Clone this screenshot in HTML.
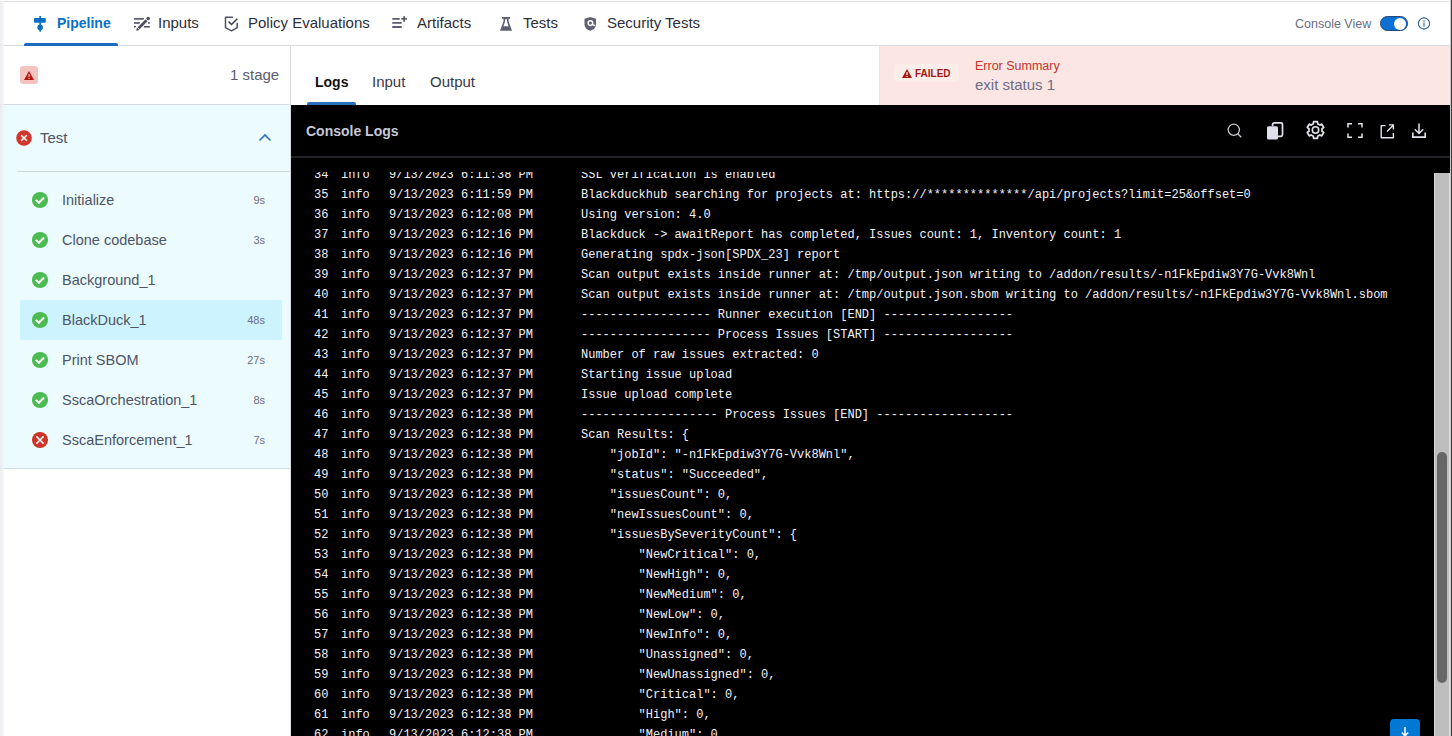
<!DOCTYPE html>
<html><head><meta charset="utf-8">
<style>
*{box-sizing:border-box;margin:0;padding:0}
html,body{width:1452px;height:736px;overflow:hidden;background:#fff;font-family:"Liberation Sans",sans-serif;color:#22222a}
.abs{position:absolute}
#topline{left:0;top:1px;width:1452px;height:1px;background:#dcdce2}
#lstrip{left:0;top:1px;width:4px;height:735px;background:linear-gradient(90deg,#e6e7eb,#f4f5f8);opacity:.75}
#nav{left:0;top:0;width:1452px;height:46px;border-bottom:1px solid #d9dae5}
.nt{position:absolute;top:13px;font-size:15px;line-height:20px;color:#2e2f3a;white-space:nowrap}
.ni{position:absolute;top:15px}
#sidebar{left:0;top:46px;width:291px;height:690px;border-right:1px solid #d9dae5;background:#fff}
#sbhead{left:0;top:0;width:290px;height:59px;border-bottom:1px solid #d9dae5}
#stage{left:0;top:59px;width:290px;height:364px;background:#ecfbfd;border-bottom:1px solid #d6dee5}
.step{position:absolute;left:20px;width:262px;height:40px;border-radius:4px}
.step .t{position:absolute;left:42px;top:11px;font-size:14.5px;line-height:20px;color:#4d5566;white-space:nowrap}
.step .d{position:absolute;right:17px;top:14px;font-size:11px;line-height:14px;color:#6b6d85}
.step svg{position:absolute;left:11px;top:12px}
#tabs{left:291px;top:46px;width:587px;height:59px;background:#fff}
.tab{position:absolute;top:26px;font-size:15px;line-height:20px;color:#22222a}
#err{left:879px;top:46px;width:571px;height:59px;background:#fbe6e4;border-left:1px solid #ece4e8}
#console{left:291px;top:105px;width:1159px;height:631px;background:#000}
#chead{left:0;top:0;width:1159px;height:53px;border-bottom:2px solid #222228}
#logs{left:0;top:67px;width:1143px;height:564px;overflow:hidden}
.lwrap{position:absolute;left:0;top:-7px}
.ln{position:relative;height:20px;font-family:"Liberation Mono",monospace;font-size:12px;line-height:20px;color:#f3f3fa;white-space:pre}
.ln span{position:absolute;top:0}
.ln .n{left:23px}
.ln .lv{left:50px}
.ln .ts{left:98px}
.ln .msg{left:290px}
#sbtrack{left:1143px;top:68px;width:16px;height:563px;background:#bebebe;border-left:1px solid #d8d8d8;border-right:1px solid #e2e2e2}
#sbthumb{left:1146px;top:347px;width:10px;height:231px;background:#676767;border-radius:5px}
#edge1{left:1450px;top:0;width:1px;height:736px;background:#c9c9cc}
#edge2{left:1451px;top:0;width:1px;height:736px;background:#3a3a3a}
</style></head><body>
<div id="nav" class="abs">
  <div id="topline" class="abs"></div>
  <!-- Pipeline -->
  <svg class="ni" style="left:28px;top:10px" width="26" height="26" viewBox="0 0 26 26"><g fill="#0a6fc7"><rect x="11.3" y="6" width="1.7" height="3"/><rect x="6" y="8" width="11.8" height="4.7" rx="1"/><rect x="11.3" y="12" width="1.7" height="4"/><circle cx="12.1" cy="17.4" r="2.8"/><rect x="11.3" y="19" width="1.7" height="2.7"/></g></svg>
  <div class="nt" style="left:57px;color:#0a6fc7;font-weight:bold;font-size:14px;top:13px">Pipeline</div>
  <div class="abs" style="left:24px;top:43px;width:94px;height:3px;background:#1a6bbd;border-radius:2px 2px 0 0"></div>
  <!-- Inputs -->
  <svg class="ni" style="left:130px;top:10px" width="26" height="26" viewBox="0 0 26 26"><g fill="#4f5162"><rect x="4" y="8.1" width="10" height="1.6"/><rect x="4" y="12.2" width="6" height="1.6"/><rect x="4" y="16" width="2" height="1.6"/><rect x="14" y="16" width="5.8" height="1.6"/><rect x="18" y="12.2" width="1.8" height="1.6"/></g><path d="M6.6 20.2 18.2 8.5" stroke="#fff" stroke-width="5.2"/><path d="M8.6 18.2 16.6 10.2" stroke="#4f5162" stroke-width="2.8"/><path d="M6.2 20.8 6.9 17.4 9.6 20.1z" fill="#4f5162"/><circle cx="18.2" cy="8.5" r="1.8" fill="#4f5162"/></svg>
  <div class="nt" style="left:158px">Inputs</div>
  <!-- Policy -->
  <svg class="ni" style="left:220px;top:10px" width="26" height="26" viewBox="0 0 26 26"><path d="M12.9 7.2H5.5V17.7L11.5 20.8 17.2 17.7V12.7" fill="none" stroke="#4f5162" stroke-width="1.5" stroke-linejoin="round"/><path d="M8.5 11.5 11.5 14.5 17.3 8.7" fill="none" stroke="#383946" stroke-width="1.5"/></svg>
  <div class="nt" style="left:248px">Policy Evaluations</div>
  <!-- Artifacts -->
  <svg class="ni" style="left:388px;top:10px" width="26" height="26" viewBox="0 0 26 26"><g fill="#5c5e70"><rect x="4.2" y="7.9" width="7.6" height="1.8" rx=".5"/><rect x="4.2" y="12" width="9.6" height="1.8" rx=".5"/><rect x="4.2" y="16.1" width="9.6" height="1.8" rx=".5"/><rect x="13.2" y="7.9" width="5.8" height="1.8"/><rect x="15.2" y="6.2" width="1.8" height="5.6"/></g></svg>
  <div class="nt" style="left:417px">Artifacts</div>
  <!-- Tests -->
  <svg class="ni" style="left:494px;top:10px" width="26" height="26" viewBox="0 0 26 26"><path d="M8 6.9H16V8.7H14.6V11.3L18 20.7H6L9.5 11.3V8.7H8Z" fill="#5f6173"/><path d="M11.1 9.2H13V11.5L14.6 16.3H9.4L11.1 11.5Z" fill="#fff"/></svg>
  <div class="nt" style="left:523px">Tests</div>
  <!-- Security -->
  <svg class="ni" style="left:578px;top:10px" width="26" height="26" viewBox="0 0 26 26"><path d="M12.3 7 18 8.8V14.5C18 17.5 15.5 19.9 12.3 20.7 9 19.9 6.5 17.5 6.5 14.5V8.8Z" fill="#5f6173"/><circle cx="12.4" cy="13.1" r="2.3" fill="none" stroke="#fff" stroke-width="1.5"/><path d="M14 14.4 17.2 15.6" stroke="#fff" stroke-width="1.3"/></svg>
  <div class="nt" style="left:607px">Security Tests</div>
  <!-- console view -->
  <div class="nt" style="left:1295px;top:14px;font-size:12.5px;color:#6b6d85">Console View</div>
  <div class="abs" style="left:1380px;top:16px;width:28px;height:15px;border-radius:8px;background:#0a72d6;border:1.5px solid #26466e"></div>
  <div class="abs" style="left:1394px;top:17.5px;width:12px;height:12px;border-radius:6px;background:#fff"></div>
  <svg class="ni" style="left:1417px;top:17px" width="14" height="14" viewBox="0 0 14 14"><circle cx="7" cy="6.5" r="5.6" fill="none" stroke="#2e609c" stroke-width="1.1"/><circle cx="7" cy="4" r="0.8" fill="#2e609c"/><rect x="6.4" y="5.6" width="1.2" height="3.9" fill="#2e609c"/></svg>
</div>

<div id="sidebar" class="abs">
  <div id="sbhead" class="abs">
    <div class="abs" style="left:20px;top:20px;width:18px;height:18px;border-radius:3px;background:#f5c3c0"></div>
    <svg class="abs" style="left:24px;top:25px" width="10" height="9" viewBox="0 0 10 9"><path d="M5 0 10 9H0z" fill="#b41710"/><rect x="4.4" y="3" width="1.2" height="3" fill="#f5c3c0"/><rect x="4.4" y="6.8" width="1.2" height="1.2" fill="#f5c3c0"/></svg>
    <div class="abs" style="left:230px;top:19px;font-size:15px;line-height:20px;color:#5b5e6e">1 stage</div>
  </div>
  <div id="stage" class="abs">
    <svg class="abs" style="left:16px;top:25px" width="16" height="16" viewBox="0 0 16 16"><circle cx="8" cy="8" r="7.8" fill="#d2352a"/><path d="M5.2 5.2l5.6 5.6M10.8 5.2l-5.6 5.6" stroke="#fff" stroke-width="1.6"/></svg>
    <div class="abs" style="left:40px;top:23px;font-size:15px;line-height:20px;color:#4f5162">Test</div>
    <svg class="abs" style="left:258px;top:28px" width="14" height="9" viewBox="0 0 14 9"><path d="M1.5 7.5 7 2l5.5 5.5" fill="none" stroke="#2f74bf" stroke-width="1.6"/></svg>
    <div class="abs" style="left:17px;top:66px;width:273px;height:1px;background:#cfd8dd"></div>
    <div class="step" style="top:74px;"><svg width="18" height="18" viewBox="0 0 18 18"><circle cx="9" cy="9" r="8.1" fill="#4cbb51"/><path d="M4.9 8.9l2.9 2.9 5.3-5.3" fill="none" stroke="#fff" stroke-width="2"/></svg><div class="t">Initialize</div><div class="d">9s</div></div>
<div class="step" style="top:114px;"><svg width="18" height="18" viewBox="0 0 18 18"><circle cx="9" cy="9" r="8.1" fill="#4cbb51"/><path d="M4.9 8.9l2.9 2.9 5.3-5.3" fill="none" stroke="#fff" stroke-width="2"/></svg><div class="t">Clone codebase</div><div class="d">3s</div></div>
<div class="step" style="top:154px;"><svg width="18" height="18" viewBox="0 0 18 18"><circle cx="9" cy="9" r="8.1" fill="#4cbb51"/><path d="M4.9 8.9l2.9 2.9 5.3-5.3" fill="none" stroke="#fff" stroke-width="2"/></svg><div class="t">Background_1</div><div class="d"></div></div>
<div class="step" style="top:194px;"><div style="position:absolute;left:0;top:1px;width:262px;height:40px;background:#cdf4fe;border-radius:2px"></div><svg width="18" height="18" viewBox="0 0 18 18"><circle cx="9" cy="9" r="8.1" fill="#4cbb51"/><path d="M4.9 8.9l2.9 2.9 5.3-5.3" fill="none" stroke="#fff" stroke-width="2"/></svg><div class="t">BlackDuck_1</div><div class="d">48s</div></div>
<div class="step" style="top:234px;"><svg width="18" height="18" viewBox="0 0 18 18"><circle cx="9" cy="9" r="8.1" fill="#4cbb51"/><path d="M4.9 8.9l2.9 2.9 5.3-5.3" fill="none" stroke="#fff" stroke-width="2"/></svg><div class="t">Print SBOM</div><div class="d">27s</div></div>
<div class="step" style="top:274px;"><svg width="18" height="18" viewBox="0 0 18 18"><circle cx="9" cy="9" r="8.1" fill="#4cbb51"/><path d="M4.9 8.9l2.9 2.9 5.3-5.3" fill="none" stroke="#fff" stroke-width="2"/></svg><div class="t">SscaOrchestration_1</div><div class="d">8s</div></div>
<div class="step" style="top:314px;"><svg width="18" height="18" viewBox="0 0 18 18"><circle cx="9" cy="9" r="8" fill="#cc3428"/><path d="M5.4 5.4l7.2 7.2M12.6 5.4l-7.2 7.2" fill="none" stroke="#fff" stroke-width="1.5"/></svg><div class="t">SscaEnforcement_1</div><div class="d">7s</div></div>
  </div>
</div>

<div id="tabs" class="abs">
  <div class="tab" style="left:24px;font-weight:bold;font-size:14px;top:26px;color:#111114">Logs</div>
  <div class="tab" style="left:81px;color:#383946">Input</div>
  <div class="tab" style="left:139px;color:#383946">Output</div>
  <div class="abs" style="left:16px;top:56px;width:49px;height:3px;background:#2b70bd;border-radius:2px 2px 0 0"></div>
</div>

<div id="err" class="abs">
  <div class="abs" style="left:14px;top:18px;width:65px;height:18px;border-radius:4px;background:#fcedeb"></div>
  <svg class="abs" style="left:22px;top:23px" width="10" height="9" viewBox="0 0 10 9"><path d="M5 0 10 9H0z" fill="#a3180f"/><rect x="4.4" y="3" width="1.2" height="3" fill="#fcedeb"/><rect x="4.4" y="6.8" width="1.2" height="1.2" fill="#fcedeb"/></svg>
  <div class="abs" style="left:35px;top:21px;font-size:10px;line-height:14px;font-weight:bold;color:#a3180f">FAILED</div>
  <div class="abs" style="left:95px;top:12px;font-size:12.5px;line-height:16px;color:#c5332c">Error Summary</div>
  <div class="abs" style="left:95px;top:30px;font-size:15px;line-height:18px;color:#6b6d85">exit status 1</div>
</div>

<div id="console" class="abs">
  <div id="chead" class="abs">
    <div class="abs" style="left:15px;top:16px;font-size:14px;line-height:20px;font-weight:bold;color:#c6c8d6">Console Logs</div>
    <svg class="abs" style="left:935px;top:17px" width="18" height="18" viewBox="0 0 18 18"><circle cx="7.8" cy="7.8" r="5.6" fill="none" stroke="#c9c9cf" stroke-width="1.3"/><path d="M11.8 11.8 15.2 15.2" stroke="#c9c9cf" stroke-width="1.3"/></svg>
<svg class="abs" style="left:974px;top:16px" width="20" height="20" viewBox="0 0 20 20"><rect x="7.6" y="1.9" width="9.9" height="13.4" rx="1.6" fill="none" stroke="#e3e4ec" stroke-width="1.7"/><rect x="2" y="5" width="11" height="14" rx="1.6" fill="#000"/><rect x="2" y="5.3" width="11" height="13.3" rx="1.6" fill="#dfe0ea"/></svg>
<svg class="abs" style="left:1015px;top:15px" width="19" height="20" viewBox="0 0 19 20"><path d="M7.35 3.76 L7.57 1.62 L11.43 1.62 L11.65 3.76 L13.83 5.02 L15.79 4.13 L17.72 7.49 L15.98 8.74 L15.98 11.26 L17.72 12.51 L15.79 15.87 L13.83 14.98 L11.65 16.24 L11.43 18.38 L7.57 18.38 L7.35 16.24 L5.17 14.98 L3.21 15.87 L1.28 12.51 L3.02 11.26 L3.02 8.74 L1.28 7.49 L3.21 4.13 L5.17 5.02Z" fill="none" stroke="#e3e4ec" stroke-width="1.7" stroke-linejoin="round"/><circle cx="9.5" cy="10" r="3.2" fill="none" stroke="#e3e4ec" stroke-width="1.6"/></svg>
<svg class="abs" style="left:1055px;top:17px" width="18" height="17" viewBox="0 0 18 17"><path d="M2 5.5V1.8h4M12 1.8h4v3.7M16 11.5v3.7h-4M6 15.2H2v-3.7" fill="none" stroke="#e3e4ec" stroke-width="1.5"/></svg>
<svg class="abs" style="left:1088px;top:18px" width="16" height="16" viewBox="0 0 16 16"><path d="M6.5 2.6H2.2v12.2h12.2V10" fill="none" stroke="#e3e4ec" stroke-width="1.4" stroke-linejoin="round"/><path d="M8 8.5 14.3 2.2M9.8 1.9h4.6v4.6" fill="none" stroke="#e3e4ec" stroke-width="1.4"/></svg>
<svg class="abs" style="left:1120px;top:17px" width="16" height="17" viewBox="0 0 16 17"><path d="M8 1.5v10M3.8 7.3 8 11.5l4.2-4.2" fill="none" stroke="#e3e4ec" stroke-width="1.5"/><path d="M1.8 10.5v4.6h12.4v-4.6" fill="none" stroke="#e3e4ec" stroke-width="1.6"/></svg>

  </div>
  <div id="logs" class="abs"><div class="lwrap">
<div class="ln"><span class="n">34</span><span class="lv">info</span><span class="ts">9/13/2023 6:11:38 PM</span><span class="msg">SSL verification is enabled</span></div>
<div class="ln"><span class="n">35</span><span class="lv">info</span><span class="ts">9/13/2023 6:11:59 PM</span><span class="msg">Blackduckhub searching for projects at: https://**************/api/projects?limit=25&amp;offset=0</span></div>
<div class="ln"><span class="n">36</span><span class="lv">info</span><span class="ts">9/13/2023 6:12:08 PM</span><span class="msg">Using version: 4.0</span></div>
<div class="ln"><span class="n">37</span><span class="lv">info</span><span class="ts">9/13/2023 6:12:16 PM</span><span class="msg">Blackduck -&gt; awaitReport has completed, Issues count: 1, Inventory count: 1</span></div>
<div class="ln"><span class="n">38</span><span class="lv">info</span><span class="ts">9/13/2023 6:12:16 PM</span><span class="msg">Generating spdx-json[SPDX_23] report</span></div>
<div class="ln"><span class="n">39</span><span class="lv">info</span><span class="ts">9/13/2023 6:12:37 PM</span><span class="msg">Scan output exists inside runner at: /tmp/output.json writing to /addon/results/-n1FkEpdiw3Y7G-Vvk8Wnl</span></div>
<div class="ln"><span class="n">40</span><span class="lv">info</span><span class="ts">9/13/2023 6:12:37 PM</span><span class="msg">Scan output exists inside runner at: /tmp/output.json.sbom writing to /addon/results/-n1FkEpdiw3Y7G-Vvk8Wnl.sbom</span></div>
<div class="ln"><span class="n">41</span><span class="lv">info</span><span class="ts">9/13/2023 6:12:37 PM</span><span class="msg">------------------ Runner execution [END] ------------------</span></div>
<div class="ln"><span class="n">42</span><span class="lv">info</span><span class="ts">9/13/2023 6:12:37 PM</span><span class="msg">------------------ Process Issues [START] ------------------</span></div>
<div class="ln"><span class="n">43</span><span class="lv">info</span><span class="ts">9/13/2023 6:12:37 PM</span><span class="msg">Number of raw issues extracted: 0</span></div>
<div class="ln"><span class="n">44</span><span class="lv">info</span><span class="ts">9/13/2023 6:12:37 PM</span><span class="msg">Starting issue upload</span></div>
<div class="ln"><span class="n">45</span><span class="lv">info</span><span class="ts">9/13/2023 6:12:37 PM</span><span class="msg">Issue upload complete</span></div>
<div class="ln"><span class="n">46</span><span class="lv">info</span><span class="ts">9/13/2023 6:12:38 PM</span><span class="msg">------------------- Process Issues [END] -------------------</span></div>
<div class="ln"><span class="n">47</span><span class="lv">info</span><span class="ts">9/13/2023 6:12:38 PM</span><span class="msg">Scan Results: {</span></div>
<div class="ln"><span class="n">48</span><span class="lv">info</span><span class="ts">9/13/2023 6:12:38 PM</span><span class="msg">    &quot;jobId&quot;: &quot;-n1FkEpdiw3Y7G-Vvk8Wnl&quot;,</span></div>
<div class="ln"><span class="n">49</span><span class="lv">info</span><span class="ts">9/13/2023 6:12:38 PM</span><span class="msg">    &quot;status&quot;: &quot;Succeeded&quot;,</span></div>
<div class="ln"><span class="n">50</span><span class="lv">info</span><span class="ts">9/13/2023 6:12:38 PM</span><span class="msg">    &quot;issuesCount&quot;: 0,</span></div>
<div class="ln"><span class="n">51</span><span class="lv">info</span><span class="ts">9/13/2023 6:12:38 PM</span><span class="msg">    &quot;newIssuesCount&quot;: 0,</span></div>
<div class="ln"><span class="n">52</span><span class="lv">info</span><span class="ts">9/13/2023 6:12:38 PM</span><span class="msg">    &quot;issuesBySeverityCount&quot;: {</span></div>
<div class="ln"><span class="n">53</span><span class="lv">info</span><span class="ts">9/13/2023 6:12:38 PM</span><span class="msg">        &quot;NewCritical&quot;: 0,</span></div>
<div class="ln"><span class="n">54</span><span class="lv">info</span><span class="ts">9/13/2023 6:12:38 PM</span><span class="msg">        &quot;NewHigh&quot;: 0,</span></div>
<div class="ln"><span class="n">55</span><span class="lv">info</span><span class="ts">9/13/2023 6:12:38 PM</span><span class="msg">        &quot;NewMedium&quot;: 0,</span></div>
<div class="ln"><span class="n">56</span><span class="lv">info</span><span class="ts">9/13/2023 6:12:38 PM</span><span class="msg">        &quot;NewLow&quot;: 0,</span></div>
<div class="ln"><span class="n">57</span><span class="lv">info</span><span class="ts">9/13/2023 6:12:38 PM</span><span class="msg">        &quot;NewInfo&quot;: 0,</span></div>
<div class="ln"><span class="n">58</span><span class="lv">info</span><span class="ts">9/13/2023 6:12:38 PM</span><span class="msg">        &quot;Unassigned&quot;: 0,</span></div>
<div class="ln"><span class="n">59</span><span class="lv">info</span><span class="ts">9/13/2023 6:12:38 PM</span><span class="msg">        &quot;NewUnassigned&quot;: 0,</span></div>
<div class="ln"><span class="n">60</span><span class="lv">info</span><span class="ts">9/13/2023 6:12:38 PM</span><span class="msg">        &quot;Critical&quot;: 0,</span></div>
<div class="ln"><span class="n">61</span><span class="lv">info</span><span class="ts">9/13/2023 6:12:38 PM</span><span class="msg">        &quot;High&quot;: 0,</span></div>
<div class="ln"><span class="n">62</span><span class="lv">info</span><span class="ts">9/13/2023 6:12:38 PM</span><span class="msg">        &quot;Medium&quot;: 0,</span></div>
  </div></div>
  <div id="sbtrack" class="abs"></div>
  <div id="sbthumb" class="abs"></div>
  <div class="abs" style="left:1099px;top:614px;width:30px;height:24px;border-radius:4px;background:#0278d5"></div>
  <svg class="abs" style="left:1107px;top:619px" width="14" height="14" viewBox="0 0 14 14"><path d="M7 3v9M3.8 8.6 7 11.8l3.2-3.2" fill="none" stroke="#fff" stroke-width="1.5"/></svg>
</div>
<div id="lstrip" class="abs"></div>
<div id="edge1" class="abs"></div>
<div id="edge2" class="abs"></div>
</body></html>
